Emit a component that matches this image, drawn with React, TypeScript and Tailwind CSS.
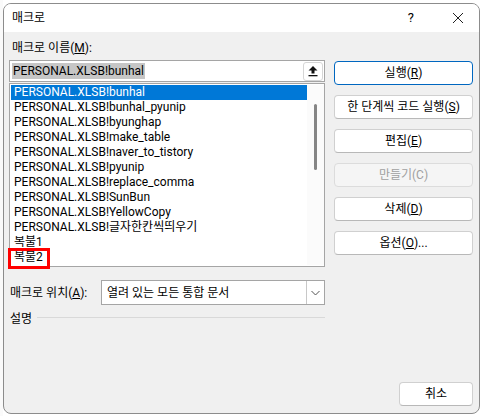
import React from "react";

const items = [
  "PERSONAL.XLSB!bunhal",
  "PERSONAL.XLSB!bunhal_pyunip",
  "PERSONAL.XLSB!byunghap",
  "PERSONAL.XLSB!make_table",
  "PERSONAL.XLSB!naver_to_tistory",
  "PERSONAL.XLSB!pyunip",
  "PERSONAL.XLSB!replace_comma",
  "PERSONAL.XLSB!SunBun",
  "PERSONAL.XLSB!YellowCopy",
  "PERSONAL.XLSB!글자한칸씩띄우기",
  "복불1",
  "복불2",
];

function Btn({
  label,
  hotkey,
  tail = ")",
  primary,
  disabled,
}: {
  label: string;
  hotkey?: string;
  tail?: string;
  primary?: boolean;
  disabled?: boolean;
}) {
  return (
    <div
      className={
        "h-[24px] w-full rounded-[4px] border flex items-center justify-center text-[12px] leading-none " +
        (primary
          ? "border-[#0067c0] bg-white text-black"
          : disabled
            ? "border-[#dcdcdc] bg-[#f5f5f5] text-[#a0a0a0]"
            : "border-[#d0d0d0] border-b-[#b8b8b8] bg-white text-black")
      }
    >
      {label}
      {hotkey && (
        <>
          (<span className={disabled ? "" : "underline"}>{hotkey}</span>
          {tail}
        </>
      )}
    </div>
  );
}

export default function App() {
  return (
    <div
      className="w-[481px] h-[416px] bg-white relative overflow-hidden"
      style={{ fontFamily: 'Roboto, "Noto Sans CJK KR", sans-serif' }}
    >
      <div className="absolute left-0 top-0 w-[3px] h-full bg-[#fafafa]" />
      <div className="ml-[3px] mt-[3px] w-[477px] h-[411px] border border-[#8c8c8c] rounded-[8px] overflow-hidden bg-[#f0f0f0] flex flex-col">
        {/* title bar */}
        <div className="h-[28px] bg-white flex items-center pl-[8px] shrink-0">
          <span className="text-[12px] text-black">매크로</span>
          <span className="ml-auto mr-[38px] text-[13px] text-black">?</span>
          <svg width="12" height="12" viewBox="0 0 12 12" className="mr-[15px]">
            <path d="M1 1 L11 11 M11 1 L1 11" stroke="#222" strokeWidth="1" />
          </svg>
        </div>

        {/* body */}
        <div className="flex-1 flex pl-[5px] pr-[6px] text-[12px] text-black">
          <div className="w-[316px] flex flex-col">
            <div className="mt-[8px] h-[16px] leading-[16px] pl-[3px]">
              매크로 이름(<span className="underline">M</span>):
            </div>
            <div className="mt-[4px] h-[22px] border border-[#a5a5a5] bg-white flex items-center pl-[2px] pr-[1px]">
              <span className="bg-[#c6c6c6] h-[16px] leading-[16px] px-[1px]">PERSONAL.XLSB!bunhal</span>
              <div className="ml-auto h-[19px] w-[20px] border border-[#d6d6d6] rounded-[3px] bg-white flex items-center justify-center">
                <svg width="10" height="12" viewBox="0 0 10 12">
                  <path d="M5 1 L9.5 5.5 L6.5 5.5 L6.5 8.5 L3.5 8.5 L3.5 5.5 L0.5 5.5 Z" fill="#111" />
                  <rect x="0.5" y="10" width="9" height="1.3" fill="#111" />
                </svg>
              </div>
            </div>
            <div className="mt-[1px] h-[184px] border border-[#a5a5a5] bg-white flex py-[1px] pl-[1px] relative">
              <div className="flex-1 flex flex-col">
                {items.map((it, i) => (
                  <div
                    key={it}
                    className={
                      "h-[15px] leading-[15px] pl-[3px] whitespace-nowrap overflow-hidden " +
                      (i === 0 ? "bg-[#0078d7] text-white" : "text-black")
                    }
                  >
                    {it}
                  </div>
                ))}
              </div>
              <div className="w-[17px] bg-[#fbfbfb] relative">
                <div className="absolute left-[7px] top-[19px] w-[3px] h-[66px] rounded-full bg-[#858585]" />
              </div>
              {/* red annotation box */}
              <div className="absolute left-[-2px] top-[164px] w-[42px] h-[21px] border-[3px] border-[#ff0000]" />
            </div>

            <div className="mt-[13px] flex items-center">
              <div className="w-[92px] pl-[1px] whitespace-nowrap">
                매크로 위치(<span className="underline">A</span>):
              </div>
              <div className="h-[25px] flex-1 border border-[#a5a5a5] bg-white flex items-center">
                <span className="pl-[5px]">열려 있는 모든 통합 문서</span>
                <div className="ml-auto h-full w-[18px] border-l border-[#c8c8c8] flex items-center justify-center">
                  <svg width="9" height="6" viewBox="0 0 9 6">
                    <path d="M0.5 1 L4.5 5 L8.5 1" stroke="#555" strokeWidth="1" fill="none" />
                  </svg>
                </div>
              </div>
            </div>

            <div className="mt-[6px] h-[16px] flex items-center">
              <span className="pl-[1px] leading-[16px]">설명</span>
              <div className="flex-1 ml-[5px] mb-[3px] h-px bg-[#d9d9d9]" />
            </div>
          </div>

          <div className="ml-[9px] flex-1 flex flex-col pt-[29px] pb-[7px]">
            <div className="flex flex-col gap-[10px]">
              <Btn label="실행" hotkey="R" primary />
              <Btn label="한 단계씩 코드 실행" hotkey="S" />
              <Btn label="편집" hotkey="E" />
              <Btn label="만들기" hotkey="C" disabled />
              <Btn label="삭제" hotkey="D" />
              <Btn label="옵션" hotkey="O" tail=")..." />
            </div>
            <div className="mt-auto ml-auto w-[74px]">
              <Btn label="취소" />
            </div>
          </div>
        </div>
      </div>
    </div>
  );
}
